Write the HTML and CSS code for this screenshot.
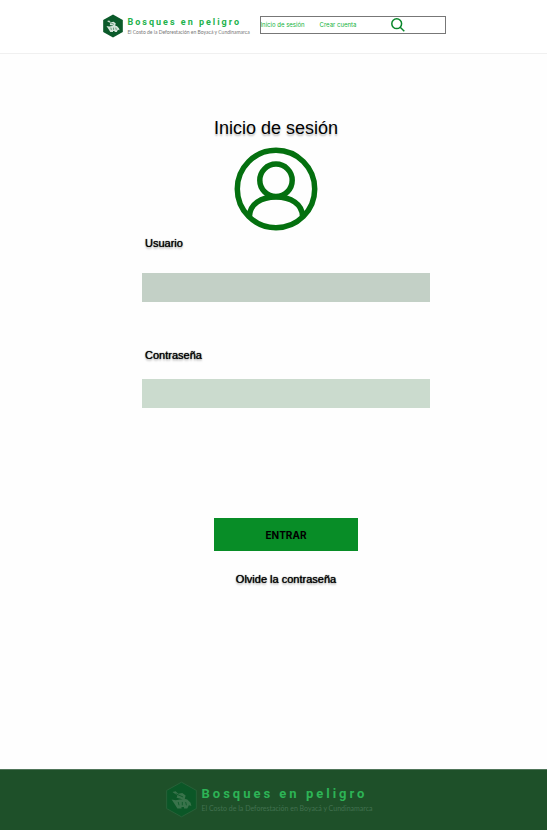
FILE: index.html
```html
<!DOCTYPE html>
<html lang="es">
<head>
<meta charset="utf-8">
<meta name="viewport" content="width=device-width, initial-scale=1">
<title>Inicio de sesión</title>
<link rel="stylesheet" href="styles.css">
</head>
<body>
<svg class="defs" aria-hidden="true">
  <symbol id="emblem" viewBox="0 0 40 44">
    <path class="hex" d="M20 1 38 11V33L20 43 2 33V11Z"/>
    <g class="mark">
      <path d="M9 13 13 12 16 15 21 14 25 17 24 21 28 23 24 24 19 21 14 20 15 17Z"/>
      <path d="M8 22 13 23 18 22 27 22 31 26 32 30 29 29 27 33H23V31H20V33H15L12 28Z"/>
    </g>
    <path class="cut" d="M13 15 22 19M16 25 17 29M21 25V29M25 25 26 29"/>
  </symbol>
</svg>
<header class="header">
  <a class="brand" href="#">
    <svg class="emblem" aria-hidden="true"><use href="#emblem"/></svg>
    <span class="brand-text">
      <span class="brand-name">Bosques en peligro</span>
      <span class="brand-tagline">El Costo de la Deforestación en Boyacá y Cundinamarca</span>
    </span>
  </a>
  <nav class="nav">
    <a href="#">Inicio de sesión</a>
    <a href="#">Crear cuenta</a>
    <button class="search" type="button" aria-label="Buscar">
      <svg viewBox="0 0 14 14" aria-hidden="true"><circle cx="5.7" cy="5.7" r="4.9"/><path d="M9.2 9.2 13.3 13.3"/></svg>
    </button>
  </nav>
</header>
<main class="main">
  <form class="login">
    <div class="intro">
      <h1>Inicio de sesión</h1>
      <svg class="avatar" viewBox="0 0 84 84" aria-hidden="true">
        <circle cx="42" cy="42" r="38.7"/>
        <circle cx="42" cy="33.3" r="16.2"/>
        <path d="M15.5 69C16 57 27 50 42 50S68 57 68.500 69"/>
      </svg>
    </div>
    <label for="user">Usuario</label>
    <input class="field user" id="user" type="text">
    <label for="password">Contraseña</label>
    <input class="field password" id="password" type="password">
    <button class="submit" type="submit">ENTRAR</button>
    <a class="forgot" href="#">Olvide la contraseña</a>
  </form>
</main>
<footer class="footer">
  <a class="brand brand-large" href="#">
    <svg class="emblem" aria-hidden="true"><use href="#emblem"/></svg>
    <span class="brand-text">
      <span class="brand-name">Bosques en peligro</span>
      <span class="brand-tagline">El Costo de la Deforestación en Boyacá y Cundinamarca</span>
    </span>
  </a>
</footer>
</body>
</html>
```
FILE: styles.css
```css
* { box-sizing: border-box; }

body {
  margin: 0;
  min-height: 100vh;
  display: flex;
  flex-direction: column;
  background: #fefefe;
  color: #000;
  font-family: "Liberation Sans", Arial, sans-serif;
}

a { color: inherit; text-decoration: none; }

.defs { display: none; }

.header {
  display: flex;
  justify-content: center;
  align-items: flex-start;
  gap: 17px;
  height: 54px;
  padding-top: 14px;
  border-bottom: 1px solid #f0f0f0;
  background: #fff;
}

.brand {
  --hex: #0b5a2a;
  --mark: #d4e3d9;
  display: flex;
  align-items: center;
  gap: 4px;
  color: #777;
}

.brand .emblem { width: 22px; height: 24px; }
.hex { fill: var(--hex); stroke: var(--edge, none); }
.mark { fill: var(--mark); }
.cut { fill: none; stroke: var(--hex); stroke-width: 1; }

.brand-text {
  display: flex;
  flex-direction: column;
  width: 115px;
  white-space: nowrap;
}

.brand-name {
  color: #22b24c;
  font: 700 9px/12px Roboto, sans-serif;
  letter-spacing: 2px;
}

.brand-tagline { font: 5px/8px Lato, sans-serif; }

.nav {
  display: flex;
  align-items: center;
  gap: 15px;
  width: 186px;
  height: 18px;
  margin-top: 2px;
  border: 1px solid #777;
  color: #12b33a;
  font: 6px/10px Inter, sans-serif;
  white-space: nowrap;
}

.search {
  width: 14px;
  height: 14px;
  margin-left: 20px;
  padding: 0;
  border: 0;
  background: none;
}

.search svg {
  display: block;
  fill: none;
  stroke: #08862a;
  stroke-width: 1.500;
}

.main {
  flex: 1;
  display: flex;
  justify-content: center;
  padding: 62px 0 0 25px;
}

.login {
  display: flex;
  flex-direction: column;
  width: 288px;
}

.intro {
  display: flex;
  flex-direction: column;
  align-items: center;
  padding-right: 20px;
}

h1 {
  margin: 0 0 7px;
  font-size: 18px;
  font-weight: 400;
  line-height: 24px;
  text-shadow: 0 2px 2px #0004;
}

.avatar {
  width: 84px;
  height: 84px;
  fill: none;
  stroke: #04700f;
  stroke-width: 5.500;
}

label, .forgot {
  font-size: 11px;
  line-height: 16px;
  text-shadow: 0 0 1px #000, 0 2px 2px #0004;
}

label { margin: 4px 0 0 3px; }

.field {
  width: 100%;
  height: 29px;
  padding: 0 8px;
  border: 0;
  font: inherit;
}

.user { margin: 22px 0 41px; background: #c3d0c6; }
.password { margin: 16px 0 110px; background: #cbdbce; }

.submit {
  align-self: center;
  width: 144px;
  height: 33px;
  border: 0;
  padding: 0;
  background: #088d27;
  color: #000;
  font: 700 10px/16px Inter, sans-serif;
}

.forgot { align-self: center; margin-top: 20px; }

.footer {
  display: flex;
  justify-content: center;
  padding: 12px 16px 12px 0;
  background: #1e5029;
  box-shadow: inset 0 1px #50765a;
}

.brand-large {
  --hex: #0b5727;
  --mark: #39734b;
  --edge: #2b633b;
  color: #427150;
}

.brand-large .emblem { width: 33px; height: 37px; }
.brand-large .brand-text { width: 165px; }
.brand-large .brand-name { color: #2db456; font-size: 13px; line-height: 16px; letter-spacing: 3px; }
.brand-large .brand-tagline { font-size: 7px; line-height: 12px; }
```
